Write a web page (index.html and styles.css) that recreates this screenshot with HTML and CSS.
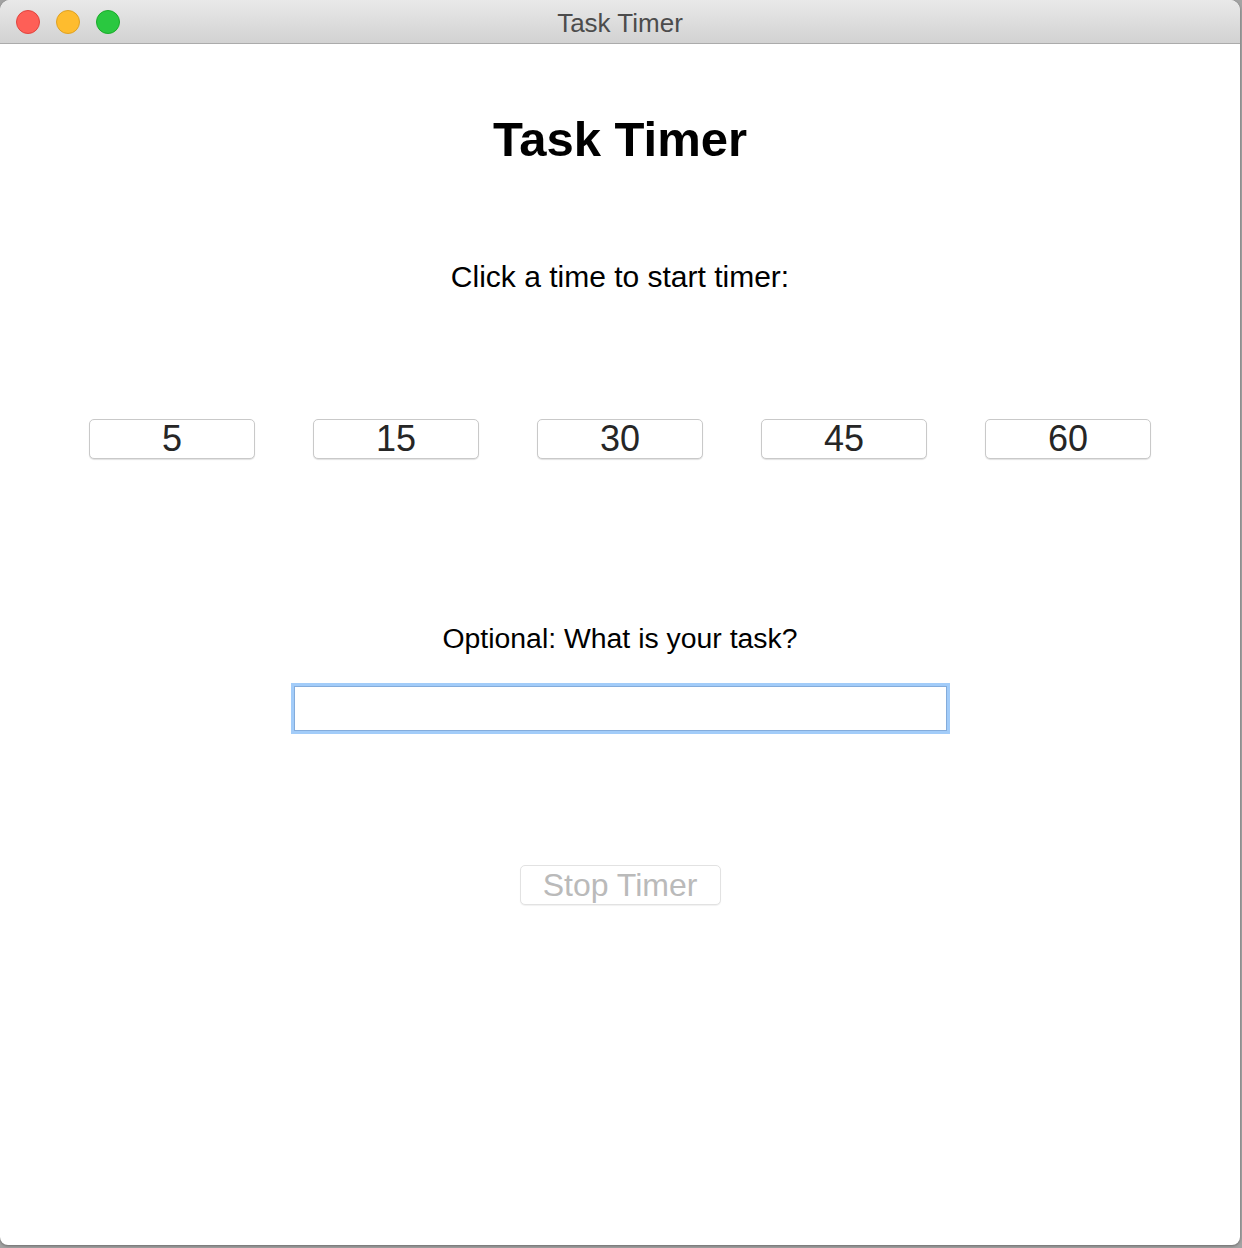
FILE: index.html
```html
<!DOCTYPE html>
<html lang="en">
<head>
  <meta charset="UTF-8" />
  <title>Task Timer</title>
  <link rel="stylesheet" href="styles.css">
</head>
<body>
  <div class="window">
    <div class="titlebar">
      <div class="lights">
        <span class="light red"></span>
        <span class="light yellow"></span>
        <span class="light green"></span>
      </div>
      <div class="title">Task Timer</div>
    </div>

    <main class="content">
      <h1>Task Timer</h1>
      <p class="prompt">Click a time to start timer:</p>

      <div class="times">
        <button class="time-button">5</button>
        <button class="time-button">15</button>
        <button class="time-button">30</button>
        <button class="time-button">45</button>
        <button class="time-button">60</button>
      </div>

      <label class="task-label" for="task">Optional: What is your task?</label>
      <input id="task" class="task-input" type="text">

      <button class="stop-button" disabled>Stop Timer</button>
    </main>
  </div>
</body>
</html>
```

FILE: styles.css
```css
* {
  margin: 0;
  padding: 0;
  box-sizing: border-box;
  font-family: 'Liberation Sans', Arial, sans-serif;
}

body {
  width: 1242px;
  height: 1248px;
  background: #a3a3a3;
  overflow: hidden;
}

.window {
  width: 1240px;
  height: 1245px;
  background: white;
  border-radius: 10px 10px 8px 8px;
  overflow: hidden;
  display: flex;
  flex-direction: column;
  box-shadow: 0 1px 3px rgba(0, 0, 0, 0.35);
}

.titlebar {
  height: 44px;
  flex-shrink: 0;
  background: linear-gradient(#e9e9e9, #d2d2d2);
  border-bottom: 1px solid #ababab;
  display: flex;
  align-items: center;
  position: relative;
}

.lights {
  display: flex;
  gap: 16px;
  padding-left: 16px;
}

.light {
  width: 24px;
  height: 24px;
  border-radius: 50%;
}

.red {
  background: #fe5f57;
  border: 1px solid #e0443e;
}

.yellow {
  background: #febc2e;
  border: 1px solid #dea123;
}

.green {
  background: #2ac840;
  border: 1px solid #1aab29;
}

.title {
  position: absolute;
  left: 0;
  right: 0;
  top: 0;
  line-height: 46px;
  text-align: center;
  font-size: 26px;
  color: #4c4c4c;
  pointer-events: none;
}

.content {
  display: flex;
  flex-direction: column;
  align-items: center;
}

h1 {
  font-size: 49px;
  font-weight: bold;
  line-height: 56px;
  margin-top: 67px;
  color: #000;
}

.prompt {
  font-size: 30px;
  line-height: 36px;
  margin-top: 92px;
  color: #000;
}

.times {
  display: flex;
  gap: 58px;
  margin-top: 124px;
}

.time-button {
  width: 166px;
  height: 40px;
  background: white;
  border: 1px solid #c9c9c9;
  border-radius: 5px;
  box-shadow: 0 1px 1px rgba(0, 0, 0, 0.12);
  font-size: 36px;
  line-height: 38px;
  color: #262626;
}

.task-label {
  font-size: 28.4px;
  line-height: 34px;
  margin-top: 162px;
  color: #000;
}

.task-input {
  width: 653px;
  height: 45px;
  margin-top: 31px;
  border: 1px solid #84acdb;
  box-shadow: 0 0 0 3px #a2ccf9;
  outline: none;
  font-size: 24px;
  padding: 0 8px;
}

.stop-button {
  width: 201px;
  height: 40px;
  margin-top: 134px;
  background: white;
  border: 1px solid #e2e2e2;
  border-radius: 5px;
  box-shadow: 0 1px 1px rgba(0, 0, 0, 0.06);
  font-size: 32px;
  line-height: 36px;
  color: #bababa;
}
```
